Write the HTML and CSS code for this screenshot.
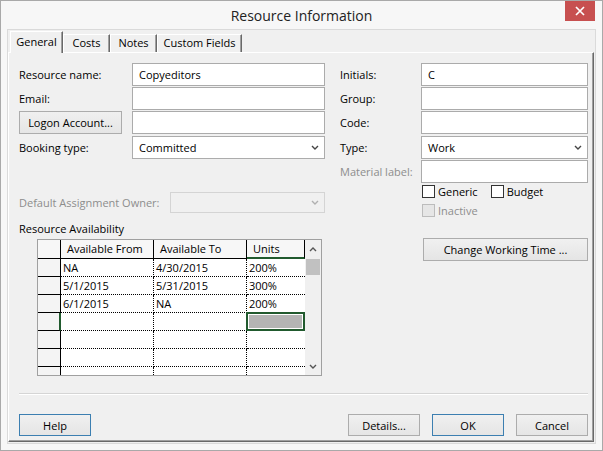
FILE: index.html
```html
<!DOCTYPE html>
<html lang="en">
<head>
    <meta charset="UTF-8">
    <title>Resource Information</title>
    <link rel="stylesheet" href="styles.css">
</head>
<body>
<div class="window">
    <div class="titlebar">
        <span class="title">Resource Information</span>
        <span class="close">
            <svg width="10" height="10" viewBox="0 0 10 10"><path d="M1 1 L9 9 M9 1 L1 9" stroke="#fff" stroke-width="1.7"/></svg>
        </span>
    </div>
    <div class="client">
        <div class="tabs">
            <div class="tab active">General</div>
            <div class="tab">Costs</div>
            <div class="tab">Notes</div>
            <div class="tab">Custom Fields</div>
        </div>
        <div class="panel">
            <div class="columns">
                <div class="col-left">
                    <div class="field">
                        <label>Resource name:</label>
                        <div class="textbox">Copyeditors</div>
                    </div>
                    <div class="field">
                        <label>Email:</label>
                        <div class="textbox"></div>
                    </div>
                    <div class="field">
                        <div><button class="btn logon">Logon Account...</button></div>
                        <div class="textbox"></div>
                    </div>
                    <div class="field gap-top">
                        <label>Booking type:</label>
                        <div class="select">
                            <span>Committed</span>
                            <svg class="chev" width="8" height="5" viewBox="0 0 8 5"><path d="M1 1 L4 4 L7 1" fill="none" stroke="#444" stroke-width="1.4"/></svg>
                        </div>
                    </div>

                    <div class="field owner">
                        <label class="muted">Default Assignment Owner:</label>
                        <div class="select disabled">
                            <span></span>
                            <svg class="chev" width="8" height="5" viewBox="0 0 8 5"><path d="M1 1 L4 4 L7 1" fill="none" stroke="#b0b0b0" stroke-width="1.4"/></svg>
                        </div>
                    </div>

                    <div class="section-label">Resource Availability</div>
                    <div class="grid-box">
                        <div class="sheet">
                            <div class="hd corner"></div>
                            <div class="hd">Available From</div>
                            <div class="hd">Available To</div>
                            <div class="hd col-sel">Units</div>

                            <div class="rh"></div>
                            <div class="cell">NA</div>
                            <div class="cell">4/30/2015</div>
                            <div class="cell last">200%</div>

                            <div class="rh"></div>
                            <div class="cell">5/1/2015</div>
                            <div class="cell">5/31/2015</div>
                            <div class="cell last">300%</div>

                            <div class="rh"></div>
                            <div class="cell">6/1/2015</div>
                            <div class="cell">NA</div>
                            <div class="cell last">200%</div>

                            <div class="rh row-sel"></div>
                            <div class="cell"></div>
                            <div class="cell"></div>
                            <div class="cell last selected"></div>

                            <div class="rh"></div>
                            <div class="cell"></div>
                            <div class="cell"></div>
                            <div class="cell last"></div>

                            <div class="rh"></div>
                            <div class="cell"></div>
                            <div class="cell"></div>
                            <div class="cell last"></div>

                            <div class="rh"></div>
                            <div class="cell"></div>
                            <div class="cell"></div>
                            <div class="cell last"></div>
                        </div>
                        <div class="scrollbar">
                            <div class="arrow">
                                <svg width="8" height="5" viewBox="0 0 8 5"><path d="M1 4 L4 1 L7 4" fill="none" stroke="#555" stroke-width="1.4"/></svg>
                            </div>
                            <div class="thumb"></div>
                            <div class="track"></div>
                            <div class="arrow">
                                <svg width="8" height="5" viewBox="0 0 8 5"><path d="M1 1 L4 4 L7 1" fill="none" stroke="#555" stroke-width="1.4"/></svg>
                            </div>
                        </div>
                    </div>
                </div>

                <div class="col-right">
                    <div class="field">
                        <label>Initials:</label>
                        <div class="textbox">C</div>
                    </div>
                    <div class="field">
                        <label>Group:</label>
                        <div class="textbox"></div>
                    </div>
                    <div class="field">
                        <label>Code:</label>
                        <div class="textbox"></div>
                    </div>
                    <div class="field gap-top">
                        <label>Type:</label>
                        <div class="select">
                            <span>Work</span>
                            <svg class="chev" width="8" height="5" viewBox="0 0 8 5"><path d="M1 1 L4 4 L7 1" fill="none" stroke="#444" stroke-width="1.4"/></svg>
                        </div>
                    </div>
                    <div class="field">
                        <label class="muted">Material label:</label>
                        <div class="textbox"></div>
                    </div>
                    <div class="checks">
                        <span class="check"><span class="box"></span>Generic</span>
                        <span class="check"><span class="box"></span>Budget</span>
                    </div>
                    <div class="checks inactive">
                        <span class="check muted"><span class="box"></span>Inactive</span>
                    </div>
                    <button class="btn working">Change Working Time ...</button>
                </div>
            </div>

            <div class="separator"></div>

            <div class="footer">
                <button class="btn default">Help</button>
                <div class="footer-right">
                    <button class="btn">Details...</button>
                    <button class="btn default">OK</button>
                    <button class="btn">Cancel</button>
                </div>
            </div>
        </div>
    </div>
</div>
</body>
</html>
```

FILE: styles.css
```css
* {
    box-sizing: border-box;
}
body {
    margin: 0;
    background: #fff;
    font-family: "Open Sans", "Noto Sans", sans-serif;
    font-size: 11px;
    color: #000;
}
.window {
    width: 603px;
    height: 451px;
    border: 1px solid #a9a9a9;
    background: #f7f7f7;
    padding: 0 6px 6px 6px;
    display: flex;
    flex-direction: column;
}
.titlebar {
    height: 28px;
    display: flex;
    align-items: center;
    justify-content: center;
    position: relative;
}
.title {
    font-size: 14px;
    color: #222;
    margin-top: 1px;
}
.close {
    position: absolute;
    top: 0;
    right: 1px;
    width: 30px;
    height: 20px;
    background: #c75050;
    display: flex;
    align-items: center;
    justify-content: center;
}
.client {
    flex: 1;
    border: 1px solid #dadada;
    background: #f0f0f0;
    padding: 1px 1px 1px 0;
    display: flex;
    flex-direction: column;
}
.tabs {
    display: flex;
    align-items: flex-end;
    height: 21px;
    padding-left: 2px;
}
.tab {
    height: 18px;
    line-height: 16px;
    text-align: center;
    border-top: 1px solid #fff;
    border-left: 1px solid #fff;
    border-right: 1px solid #696969;
    box-shadow: inset -1px 0 0 #a0a0a0;
}
.tab:nth-child(1) { width: 53px; }
.tab:nth-child(2) { width: 47px; }
.tab:nth-child(3) { width: 47px; }
.tab:nth-child(4) { width: 85px; }
.tab.active {
    height: 22px;
    line-height: 19px;
    margin-bottom: -1px;
    background: #f0f0f0;
    position: relative;
    z-index: 1;
}
.panel {
    flex: 1;
    border: 1px solid;
    border-color: #fff #696969 #696969 #fff;
    box-shadow: inset -1px -1px 0 #a0a0a0;
    padding: 10px 5px 5px 10px;
}
.columns {
    display: flex;
    gap: 15px;
}
.col-left {
    width: 306px;
    display: flex;
    flex-direction: column;
    gap: 1px;
}
.col-right {
    flex: 1;
    display: flex;
    flex-direction: column;
    gap: 1px;
}
.field {
    display: grid;
    grid-template-columns: 113px 1fr;
    align-items: center;
    height: 23px;
    white-space: nowrap;
}
.col-right .field {
    grid-template-columns: 81px 1fr;
}
.field.gap-top {
    margin-top: 1px;
}
.muted {
    color: #8d8d8d;
}
.textbox {
    height: 23px;
    border: 1px solid #ababab;
    background: #fff;
    padding: 0 6px;
    line-height: 21px;
}
.select {
    height: 23px;
    border: 1px solid #acacac;
    background: #fff;
    padding: 0 6px;
    display: flex;
    align-items: center;
    justify-content: space-between;
}
.select.disabled {
    background: #f0f0f0;
    border-color: #d4d4d4;
}
.chev {
    margin-right: -1px;
}
.btn {
    font-family: inherit;
    font-size: 11px;
    color: #000;
    height: 22px;
    padding: 0;
    border: 1px solid #acacac;
    background: linear-gradient(#f0f0f0, #e5e5e5);
}
.btn.default {
    border-color: #3c7fb1;
}
.logon {
    width: 103px;
    height: 23px;
}
.owner {
    grid-template-columns: 151px 1fr;
    height: 20px;
    margin-top: 32px;
}
.owner .select {
    height: 21px;
}
.section-label {
    margin-top: 8px;
    line-height: 16px;
}
.grid-box {
    margin-top: 1px;
    margin-left: 18px;
    width: 285px;
    height: 137px;
    border: 1px solid #a0a0a0;
    display: flex;
    overflow: hidden;
    background: #fff;
}
.sheet {
    display: grid;
    grid-template-columns: 23px 93px 93px 58px;
    grid-template-rows: 19px;
    grid-auto-rows: 18px;
    align-content: start;
}
.hd {
    background: #f7f7f7;
    border-right: 1px solid #000;
    border-bottom: 1px solid #000;
    padding-left: 6px;
    line-height: 18px;
}
.hd.corner {
    padding: 0;
}
.hd.col-sel {
    border-bottom: 2px solid #215a2e;
    line-height: 17px;
}
.rh {
    background: #f4f4f4;
    border-right: 1px solid #000;
    border-bottom: 1px solid #000;
}
.rh.row-sel {
    border-right: 2px solid #215a2e;
}
.cell {
    border-right: 1px dotted #000;
    border-bottom: 1px dotted #000;
    padding-left: 2px;
    line-height: 17px;
    position: relative;
}
.cell.last {
    border-right: none;
}
.cell.selected::after {
    content: "";
    position: absolute;
    top: -1px;
    left: -1px;
    right: 0;
    bottom: -1px;
    border: 2px solid #215a2e;
    background: #b4b4b4;
    box-shadow: inset 0 0 0 1px #fff;
}
.scrollbar {
    width: 16px;
    background: #f0f0f0;
    display: flex;
    flex-direction: column;
}
.arrow {
    height: 18px;
    display: flex;
    align-items: center;
    justify-content: center;
}
.thumb {
    height: 16px;
    margin: 1px 1px 0 1px;
    background: #c1c1c1;
}
.track {
    flex: 1;
}
.checks {
    display: flex;
    gap: 13px;
    padding-left: 82px;
    margin-top: 1px;
    height: 13px;
    align-items: center;
}
.checks.inactive {
    margin-top: 5px;
}
.check {
    display: flex;
    align-items: center;
    gap: 3px;
    line-height: 13px;
}
.box {
    width: 13px;
    height: 13px;
    border: 1px solid #333;
    background: #fff;
}
.check.muted .box {
    border-color: #bcbcbc;
    background: #e6e6e6;
}
.working {
    margin-top: 20px;
    margin-left: 83px;
    width: 165px;
    height: 23px;
}
.separator {
    margin-top: 17px;
    height: 2px;
    border-top: 1px solid #d5d5d5;
    border-bottom: 1px solid #fff;
}
.footer {
    margin-top: 19px;
    display: flex;
    justify-content: space-between;
}
.footer .btn {
    width: 72px;
}
.footer-right {
    display: flex;
    gap: 12px;
}
```
